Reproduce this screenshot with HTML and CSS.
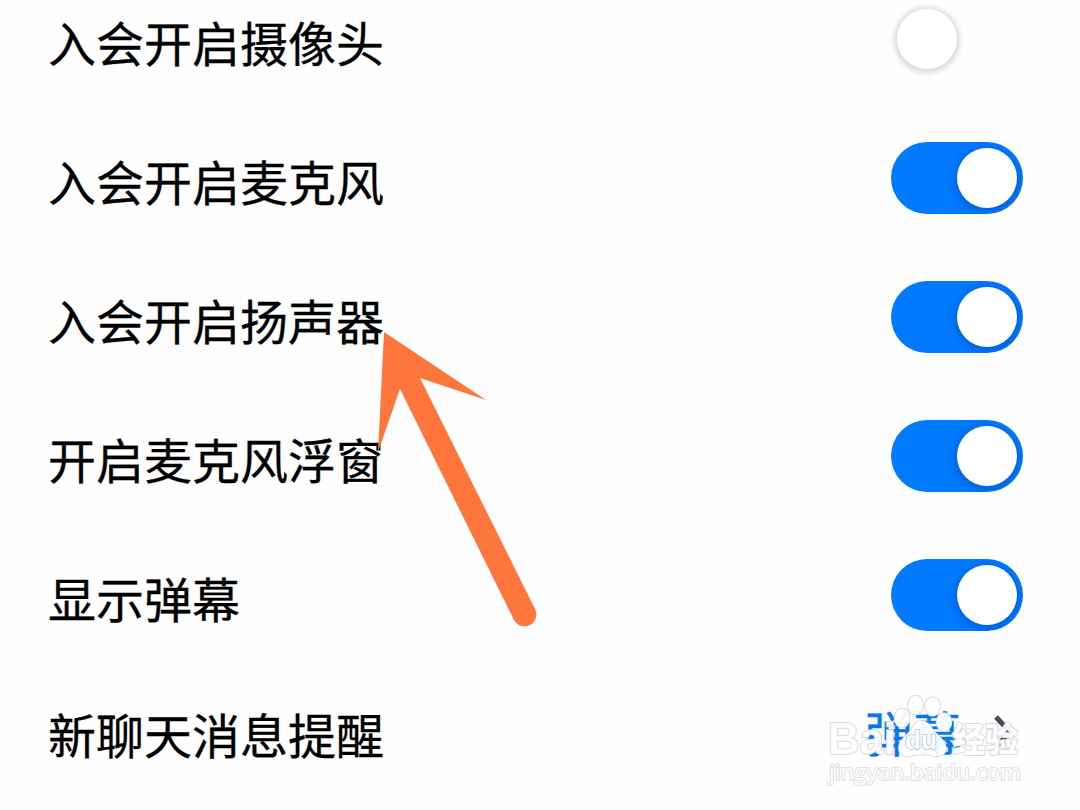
FILE: index.html
```html
<!DOCTYPE html>
<html lang="zh-CN">
<head>
  <meta charset="UTF-8">
  <title>会议设置</title>
  <link rel="stylesheet" href="styles.css">
</head>
<body>
  <main class="settings">
    <div class="row first line">
      <span class="label">入会开启摄像头</span>
      <span class="switch"><span class="knob"></span></span>
    </div>
    <div class="row after-line">
      <span class="label">入会开启麦克风</span>
      <span class="switch on"><span class="knob"></span></span>
    </div>
    <div class="row">
      <span class="label">入会开启扬声器</span>
      <span class="switch on"><span class="knob"></span></span>
    </div>
    <div class="row tall line">
      <span class="label">开启麦克风浮窗</span>
      <span class="switch on"><span class="knob"></span></span>
    </div>
    <div class="row after-line">
      <span class="label">显示弹幕</span>
      <span class="switch on"><span class="knob"></span></span>
    </div>
    <div class="row last line">
      <span class="label">新聊天消息提醒</span>
      <span class="value">
        弹幕
        <svg class="chevron" width="20" height="36" viewBox="0 0 20 36">
          <path d="M3 4 L17 19 L3 34" fill="none" stroke="#454b57" stroke-width="5"/>
        </svg>
      </span>
    </div>
  </main>

  <!-- 箭头 -->
  <svg class="arrow" width="170" height="310" viewBox="370 325 170 310">
    <path d="M384 332 L486 400 L420 378 L535 609 A11.3 11.3 0 0 1 514 620 L400 389 L378 452 Z" fill="#ff763c"/>
  </svg>

  <!-- 水印 -->
  <svg class="watermark" width="230" height="110" viewBox="810 690 230 110">
    <g class="mark">
      <text x="828" y="754" font-size="44" textLength="68" lengthAdjust="spacingAndGlyphs">Bai</text>
      <text class="cjk" x="952" y="752" font-size="34" textLength="66" lengthAdjust="spacingAndGlyphs">经验</text>
      <ellipse cx="902" cy="718" rx="7.5" ry="9.5"/>
      <ellipse cx="915.5" cy="705" rx="7.5" ry="9.5"/>
      <ellipse cx="932.5" cy="706.5" rx="7.5" ry="9.5"/>
      <ellipse cx="944" cy="722" rx="7.5" ry="9"/>
      <path d="M921 721 C927 721 930 725 933 730 C937 736 946 740 946 748 C946 755 940 757 933 756 C925 754 918 754 910 756 C903 757 898 753 899 746 C900 739 907 736 911 730 C914 725 916 721 921 721 Z"/>
      <text class="du" x="905" y="749" font-size="25" textLength="32" lengthAdjust="spacingAndGlyphs">du</text>
      <text class="url" x="829" y="780" font-size="21" textLength="192" lengthAdjust="spacingAndGlyphs">jingyan.baidu.com</text>
    </g>
  </svg>
</body>
</html>
```
FILE: styles.css
```css
body {
  margin: 0;
  height: 810px;
  overflow: hidden;
  background-color: #fefefe;
  font-family: "Noto Sans CJK SC", sans-serif;
  color: #000;
}

.settings {
  display: flex;
  flex-direction: column;
}

.row {
  display: flex;
  justify-content: space-between;
  align-items: flex-start;
  box-sizing: border-box;
  height: 139px;
  margin-left: 48px;
  padding: 32px 57px 0 0;
}

.row.first {
  height: 112px;
  padding-top: 3px;
}

.row.after-line {
  height: 137px;
  padding-top: 30px;
}

.row.tall {
  height: 141px;
}

.row.last {
  height: 135px;
  padding: 29px 67px 0 0;
}

.line {
  border-bottom: 1px solid #fafafa;
}

.label {
  padding-top: 2px;
  font-size: 48px;
  line-height: 72px;
  -webkit-text-stroke: 0.3px #000;
}

.switch {
  display: flex;
  box-sizing: border-box;
  width: 132px;
  height: 72px;
  padding: 6px;
  border-radius: 36px;
}

.switch.on {
  justify-content: flex-end;
  background-color: #007aff;
  overflow: hidden;
}

.knob {
  width: 60px;
  height: 60px;
  border-radius: 50%;
  background-color: #fff;
  box-shadow: 0 1px 5px 3px rgba(30, 30, 60, 0.16);
}

.switch.on .knob {
  box-shadow: 0 2px 12px rgba(0, 0, 80, 0.3);
}

.value {
  display: flex;
  align-items: center;
  gap: 32px;
  font-size: 48px;
  line-height: 72px;
  color: #0878e8;
  -webkit-text-stroke: 0.5px #0878e8;
}

.arrow {
  position: absolute;
  left: 370px;
  top: 325px;
}

.watermark {
  position: absolute;
  left: 810px;
  top: 690px;
}

.mark {
  font-family: "Liberation Sans", sans-serif;
  font-weight: bold;
  fill: #fff;
  fill-opacity: 0.94;
  stroke: #d4d4d4;
  stroke-width: 1.6;
  paint-order: stroke;
}

.mark .cjk {
  font-family: "Noto Sans CJK SC", sans-serif;
  font-weight: 900;
}

.mark .du {
  stroke: #b8c8dc;
}

.mark .url {
  font-family: "Open Sans", sans-serif;
  font-weight: normal;
  stroke: #e2e2e2;
  stroke-width: 2;
}
```
